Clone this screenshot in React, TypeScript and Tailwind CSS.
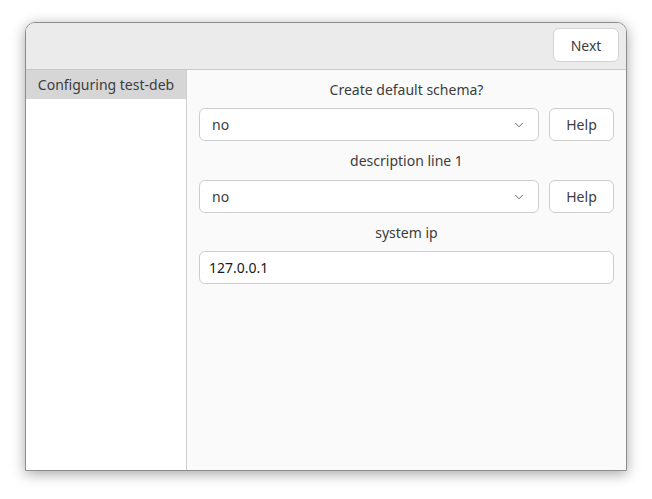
import { ChevronDown } from 'lucide-react'

const font = { fontFamily: '"Noto Sans", "Open Sans", sans-serif' }

function Combo({ value }: { value: string }) {
  return (
    <div className="flex gap-[10px]">
      <div className="flex-1 h-[33px] flex items-center justify-between px-[12px] bg-white border border-[#cdcdcd] rounded-[6px] text-[#3d3d3d]">
        <span>{value}</span>
        <ChevronDown size={14} strokeWidth={1.5} className="text-[#555]" />
      </div>
      <button className="w-[65px] h-[33px] bg-white border border-[#cdcdcd] rounded-[6px] text-[#3d3d3d]">
        Help
      </button>
    </div>
  )
}

export default function App() {
  return (
    <div className="w-[652px] h-[499px] bg-white pl-[25px] pt-[22px] text-[14px]" style={font}>
      <div className="w-[602px] h-[449px] flex flex-col border border-[#8c8c8c] rounded-t-[10px] overflow-hidden shadow-[0_3px_14px_rgba(0,0,0,0.35)]">
        <div className="h-[47px] shrink-0 bg-[#ebebeb] border-b border-[#c8c8c8] flex justify-end items-start pt-[5px] pr-[7px]">
          <button className="w-[66px] h-[34px] bg-white border border-[#d2d2d2] rounded-[6px] text-[#3d3d3d]">
            Next
          </button>
        </div>
        <div className="flex flex-1">
          <div className="w-[161px] bg-white border-r border-[#cfcfcf]">
            <div className="h-[29px] bg-[#d6d6d6] flex items-center justify-center text-[#3d3d3d]">
              Configuring test-deb
            </div>
          </div>
          <div className="flex-1 bg-[#fafafa] px-[12px] pr-[12px]">
            <div className="h-[38px] flex items-end justify-center pb-[8px] text-[#3d3d3d]">Create default schema?</div>
            <Combo value="no" />
            <div className="h-[39px] flex items-center justify-center text-[#3d3d3d]">description line 1</div>
            <Combo value="no" />
            <div className="h-[38px] flex items-center justify-center text-[#3d3d3d]">system ip</div>
            <div className="h-[33px] flex items-center px-[9px] bg-white border border-[#cdcdcd] rounded-[6px] text-[#1a1a1a]">
              127.0.0.1
            </div>
          </div>
        </div>
      </div>
    </div>
  )
}
